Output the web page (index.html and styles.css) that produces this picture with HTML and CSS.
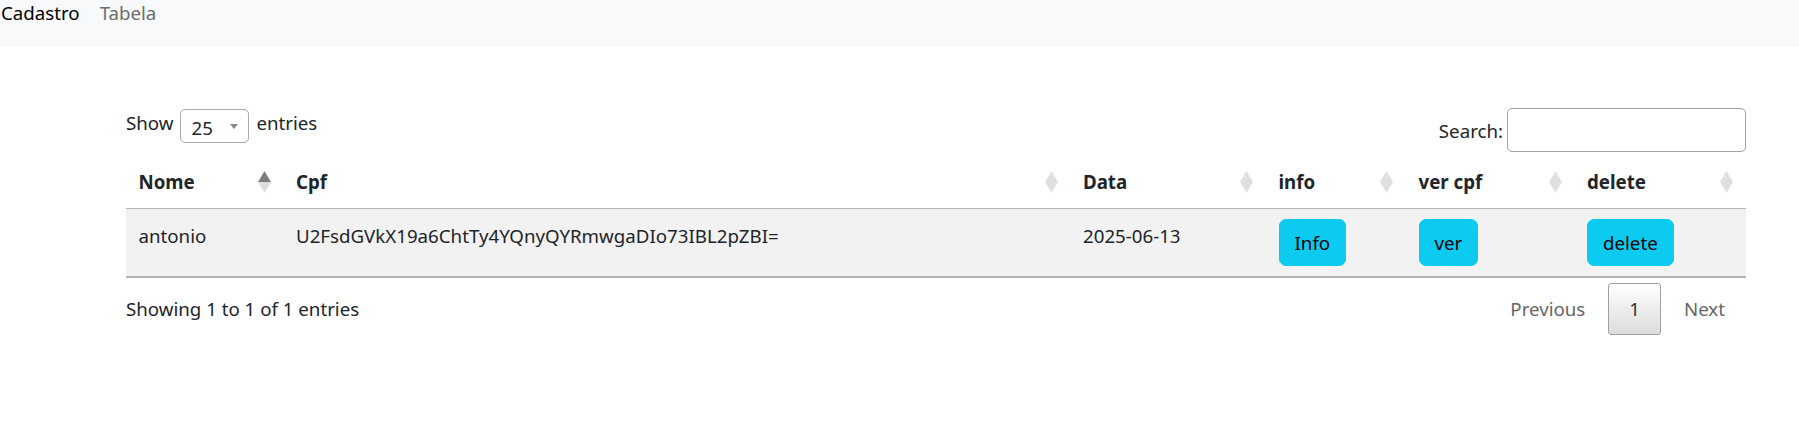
FILE: index.html
```html
<!DOCTYPE html>
<html lang="pt">
<head>
<meta charset="utf-8">
<title>Tabela</title>
<link rel="stylesheet" href="styles.css">
</head>
<body>
<nav class="navbar">
  <a class="nav-brand">Cadastro</a>
  <a class="nav-link">Tabela</a>
</nav>
<main class="content">
  <div class="top">
    <div class="length">
      <span class="lbl">Show</span>
      <div class="select"><span class="sel-val">25</span><svg class="sel-arrow" width="8" height="5" viewBox="0 0 8 5"><polygon points="0,0 8,0 4,5" fill="#888"/></svg></div>
      <span class="lbl">entries</span>
    </div>
    <div class="filter">
      <span class="lbl-s">Search:</span>
      <div class="search"></div>
    </div>
  </div>
  <table class="dt">
    <colgroup>
      <col class="c-nome"><col class="c-cpf"><col class="c-data"><col class="c-info"><col class="c-ver"><col class="c-del">
    </colgroup>
    <thead>
      <tr>
        <th><div class="th-in"><span>Nome</span><svg class="sort" width="13" height="22" viewBox="0 0 13 22"><polygon points="6.5,0 13,11 0,11" fill="#7d7d7d"/><polygon points="0,11 13,11 6.5,22" fill="#dedede"/></svg></div></th>
        <th><div class="th-in"><span>Cpf</span><svg class="sort" width="13" height="22" viewBox="0 0 13 22"><polygon points="6.5,0 13,11 6.5,22 0,11" fill="#e0e0e0"/></svg></div></th>
        <th><div class="th-in"><span>Data</span><svg class="sort" width="13" height="22" viewBox="0 0 13 22"><polygon points="6.5,0 13,11 6.5,22 0,11" fill="#e0e0e0"/></svg></div></th>
        <th><div class="th-in"><span>info</span><svg class="sort" width="13" height="22" viewBox="0 0 13 22"><polygon points="6.5,0 13,11 6.5,22 0,11" fill="#e0e0e0"/></svg></div></th>
        <th><div class="th-in"><span>ver cpf</span><svg class="sort" width="13" height="22" viewBox="0 0 13 22"><polygon points="6.5,0 13,11 6.5,22 0,11" fill="#e0e0e0"/></svg></div></th>
        <th><div class="th-in"><span>delete</span><svg class="sort" width="13" height="22" viewBox="0 0 13 22"><polygon points="6.5,0 13,11 6.5,22 0,11" fill="#e0e0e0"/></svg></div></th>
      </tr>
    </thead>
    <tbody>
      <tr class="odd">
        <td class="txt">antonio</td>
        <td class="txt">U2FsdGVkX19a6ChtTy4YQnyQYRmwgaDIo73IBL2pZBI=</td>
        <td class="txt">2025-06-13</td>
        <td><button class="btn">Info</button></td>
        <td><button class="btn">ver</button></td>
        <td><button class="btn">delete</button></td>
      </tr>
    </tbody>
  </table>
  <div class="bottom">
    <div class="info">Showing 1 to 1 of 1 entries</div>
    <div class="paginate">
      <span class="pbtn disabled">Previous</span>
      <span class="pbtn current">1</span>
      <span class="pbtn disabled">Next</span>
    </div>
  </div>
</main>
</body>
</html>
```

FILE: styles.css
```css
* { box-sizing: border-box; }
body {
  margin: 0;
  font-family: "Noto Sans", "Open Sans", sans-serif;
  font-size: 18.7px;
  line-height: 30px;
  color: #212529;
  background: #fff;
}
.navbar {
  height: 47px;
  background: #f8f9fa;
  display: flex;
  align-items: flex-start;
  gap: 20px;
  padding: 0 0 0 1px;
}
.nav-brand, .nav-link {
  line-height: 24px;
  padding-top: 1px;
}
.nav-brand { color: #000; }
.nav-link { color: #6c6c6c; }

.content {
  width: 1620px;
  margin-left: 126px;
}
.top {
  margin-top: 61px;
  height: 44px;
  display: flex;
  justify-content: space-between;
  align-items: flex-start;
}
.length {
  display: flex;
  align-items: center;
  gap: 7px;
  margin-top: 1px;
  height: 34px;
}
.lbl { margin-bottom: 6px; }
.select {
  width: 69px;
  height: 34px;
  border: 1px solid #aaa;
  border-radius: 5px;
  display: flex;
  align-items: center;
  justify-content: space-between;
  padding: 4px 10px 0 10px;
}
.sel-val { line-height: 28px; }
.sel-arrow { margin-bottom: 3px; }
.filter {
  display: flex;
  align-items: center;
  gap: 4px;
  height: 44px;
}
.lbl-s { margin-top: 1px; }
.search {
  width: 239px;
  height: 44px;
  border: 1px solid #a3a3a3;
  border-radius: 5px;
  background: #fff;
}

.dt {
  width: 1620px;
  table-layout: fixed;
  border-collapse: separate;
  border-spacing: 0;
  margin-top: 2px;
  border-bottom: 2px solid #b4b4b4;
}
.c-nome { width: 157.5px; }
.c-cpf { width: 787px; }
.c-data { width: 195.5px; }
.c-info { width: 140px; }
.c-ver { width: 168.5px; }
.c-del { width: 171.5px; }

.dt th {
  text-align: left;
  font-weight: 700;
  padding: 12px 13px 12px 12.5px;
  border-bottom: 1px solid #b4b4b4;
}
.th-in {
  display: flex;
  justify-content: space-between;
  align-items: center;
  height: 30px;
}
.th-in span { padding-top: 2px; }
.sort { flex: none; margin-top: 1px; }
.dt td {
  vertical-align: top;
  padding: 10px 12.5px;
  background: #f2f2f2;
}
.dt td.txt { padding-top: 12px; }
.btn {
  font: inherit;
  line-height: 30px;
  color: #000;
  background: #0dcaf0;
  border: 1px solid #0dcaf0;
  border-radius: 7px;
  padding: 7.5px 15px;
  height: 47px;
  cursor: pointer;
}

.bottom {
  display: flex;
  justify-content: space-between;
  align-items: flex-start;
}
.info { padding-top: 16px; }
.paginate {
  padding-top: 5px;
  display: flex;
}
.pbtn {
  display: inline-block;
  padding: 10px 20px;
  line-height: 30px;
  border: 1px solid transparent;
  border-radius: 3px;
  margin-left: 2px;
  min-width: 30px;
  text-align: center;
}
.pbtn.disabled { color: #666; }
.pbtn.current {
  color: #333;
  border-color: #a0a0a0;
  background: linear-gradient(to bottom, #ffffff 0%, #dcdcdc 100%);
}
```
